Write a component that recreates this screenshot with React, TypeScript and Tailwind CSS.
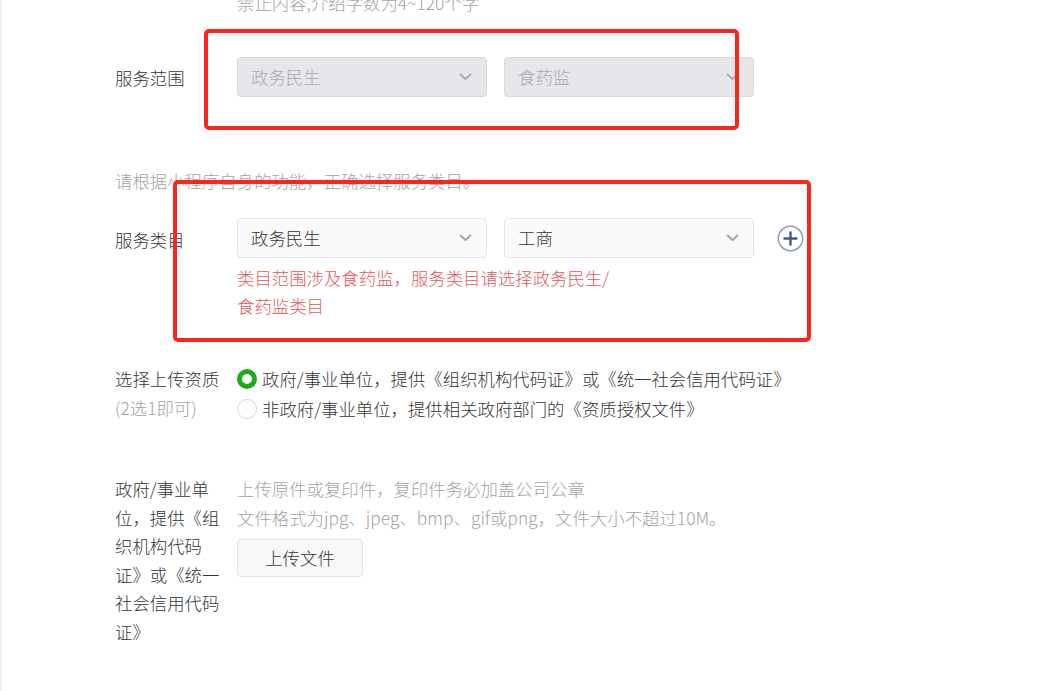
import React from "react";

const FONT = { fontFamily: '"Noto Sans CJK SC", "Noto Sans", sans-serif' };

function Chevron({ color }: { color: string }) {
  return (
    <svg width="13" height="8" viewBox="0 0 13 8" fill="none">
      <path d="M1.5 1.5 L6.5 6 L11.5 1.5" stroke={color} strokeWidth="2" strokeLinecap="round" strokeLinejoin="round" />
    </svg>
  );
}

function Select({ value, disabled }: { value: string; disabled?: boolean }) {
  return (
    <div
      className={
        disabled
          ? "flex h-[40px] w-[250px] items-center justify-between rounded-[4px] border border-[#d9d9de] bg-[#e6e6eb] pl-[13px] pr-[14px] text-[#a9a9b0]"
          : "flex h-[40px] w-[250px] items-center justify-between rounded-[4px] border border-[#e1e4ea] bg-[#fafafa] pl-[13px] pr-[14px] text-[#353535]"
      }
    >
      <span>{value}</span>
      <Chevron color={disabled ? "#a8a8b0" : "#a5a5a5"} />
    </div>
  );
}

export default function App() {
  return (
    <div
      className="relative h-[691px] w-[1038px] overflow-hidden border-l-2 border-[#efefef] bg-white text-[17.4px] font-light text-[#353535]"
      style={FONT}
    >
      <div className="mt-[-11px] flex flex-col pl-[113px]">
        {/* top hint */}
        <div className="ml-[122px] leading-[28px] text-[#a3a3a3]">禁止内容,介绍字数为4~120个字</div>

        {/* 服务范围 */}
        <div className="mt-[40px] flex items-center">
          <div className="w-[122px] pt-[2px] leading-[28px]">服务范围</div>
          <div className="flex gap-[17px]">
            <Select value="政务民生" disabled />
            <Select value="食药监" disabled />
          </div>
        </div>

        {/* hint */}
        <div className="mt-[70px] leading-[28px] text-[#a3a3a3]">请根据小程序自身的功能，正确选择服务类目。</div>

        {/* 服务类目 */}
        <div className="mt-[23px] flex items-start">
          <div className="w-[122px] pt-[2px] leading-[40px]">服务类目</div>
          <div className="flex flex-col">
            <div className="flex items-center">
              <div className="flex gap-[17px]">
                <Select value="政务民生" />
                <Select value="工商" />
              </div>
              <svg className="ml-[23px]" width="27" height="27" viewBox="0 0 27 27" fill="none">
                <circle cx="13.5" cy="13.5" r="12.2" stroke="#8e9ab8" strokeWidth="1.5" />
                <path d="M13.5 7.5 V19.5 M7.5 13.5 H19.5" stroke="#4a5a88" strokeWidth="2.4" strokeLinecap="round" />
              </svg>
            </div>
            <div className="mt-[6px] w-[385px] leading-[28px] text-[#e8555b]">
              类目范围涉及食药监，服务类目请选择政务民生/食药监类目
            </div>
          </div>
        </div>

        {/* 选择上传资质 */}
        <div className="mt-[44px] flex items-start">
          <div className="w-[122px] leading-[29px]">
            <div>选择上传资质</div>
            <div className="text-[#a3a3a3]">(2选1即可)</div>
          </div>
          <div className="flex flex-col leading-[30px]">
            <div className="flex items-center">
              <span className="mr-[5px] box-border h-[20px] w-[20px] rounded-full border-[5px] border-[#1aad19] bg-white" />
              <span>政府/事业单位，提供《组织机构代码证》或《统一社会信用代码证》</span>
            </div>
            <div className="flex items-center">
              <span className="mr-[5px] box-border h-[20px] w-[20px] rounded-full border border-[#d6d6d6] bg-white" />
              <span>非政府/事业单位，提供相关政府部门的《资质授权文件》</span>
            </div>
          </div>
        </div>

        {/* 上传 */}
        <div className="mt-[51px] flex items-start">
          <div className="w-[122px]">
            <div className="w-[108px] leading-[28.5px]">
              政府/事业单位，提供《组织机构代码证》或《统一社会信用代码证》
            </div>
          </div>
          <div className="flex flex-col items-start">
            <div className="leading-[28.5px] text-[#a3a3a3]">
              <div>上传原件或复印件，复印件务必加盖公司公章</div>
              <div>文件格式为jpg、jpeg、bmp、gif或png，文件大小不超过10M。</div>
            </div>
            <button className="mt-[7px] flex h-[38px] w-[126px] items-center justify-center rounded-[4px] border border-[#e3e3e3] bg-[#f8f8f8] text-[#353535]">
              上传文件
            </button>
          </div>
        </div>
      </div>

      {/* red annotation boxes */}
      <div className="pointer-events-none absolute left-[202px] top-[29px] h-[101px] w-[535px] rounded-[5px] border-[4px] border-[#ff2418]" />
      <div className="pointer-events-none absolute left-[171px] top-[180px] h-[162px] w-[638px] rounded-[5px] border-[4px] border-[#ff2418]" />
    </div>
  );
}
